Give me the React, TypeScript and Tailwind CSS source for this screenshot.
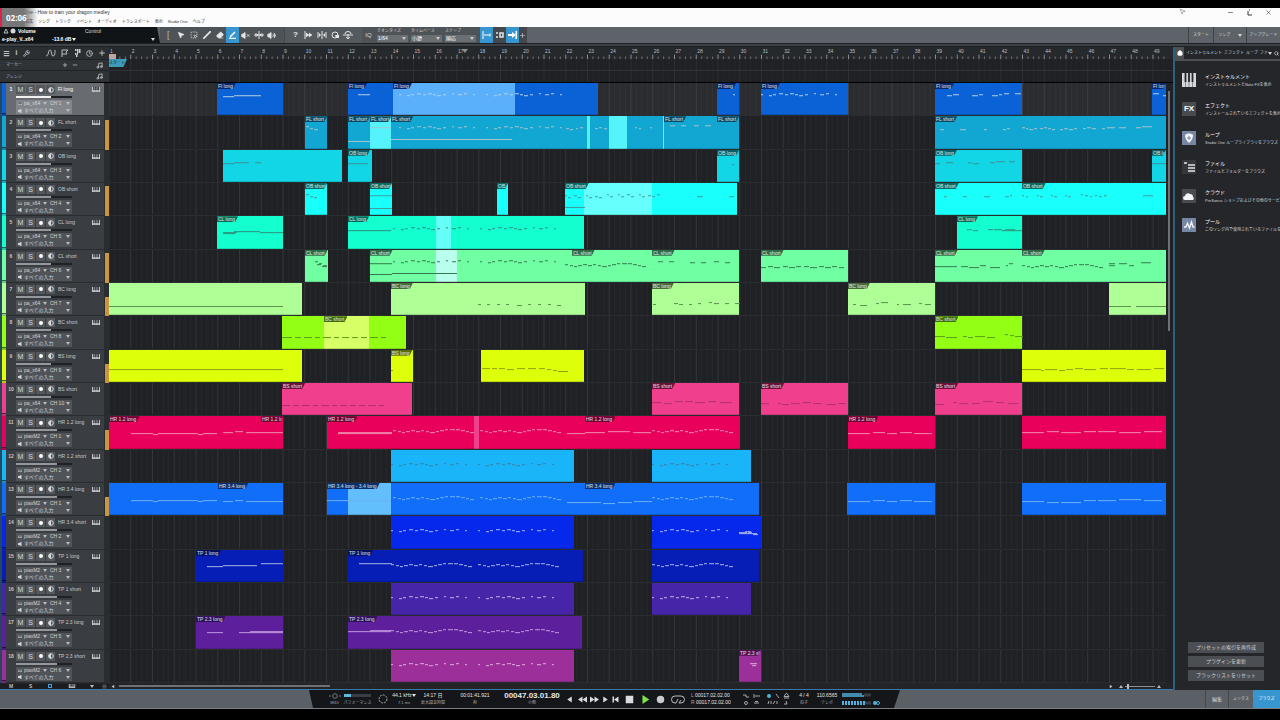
import type { ReactNode } from 'react'
import clsx from 'clsx'
import {
  Clock,
  Eraser,
  House,
  Menu,
  Minus,
  MousePointer2,
  Music,
  Pencil,
  Plus,
  Search,
  Slash,
  SquareDashedMousePointer,
  Volume2,
  VolumeX,
  Wrench,
  X,
} from 'lucide-react'

// the visible part of the song, in ticks, and the length of one bar
const SPAN = 1057
const BAR = 21.75

type Clip = {
  at: number
  end: number
  label?: string
  light?: boolean
}

type Track = {
  name: string
  inst: string
  ch: number
  color: string
  light?: string
  tab: string
  ink: string
  volume: number
  meter?: number
  clips: Clip[]
  notes: string
}

// the tune that most of the instruments share, four bars long
const TUNE =
  'h3m2 1h3m1 1h3m1-1h4m1-1h4m1 1h4m1-1h3m2 1h3m1 1h5m1-1h3m1-1h4m1-1h3m2 0h5m1 0h4m1 1h4m1 1h3m1 1h4'
const STAB =
  'h2m6 1h3m1-1h3m3-1h4m2 1h3m2-1h4m1 1h3m1 1h4m2-1h3m6-1h2m4 1h4m2-1h3m6 1h2'

const twice = (x: number, y: number, part: string) =>
  `M${x} ${y}${part}M${x + 87} ${y}${part}`
const once = (x: number, y: number, part: string) => `M${x} ${y}${part}`

const tracks: Track[] = [
  {
    name: 'Fl long',
    inst: 'pa_x64',
    ch: 1,
    color: '#0b61d6',
    light: '#5bb0fb',
    tab: '#06276b',
    ink: '#b9cfe8',
    volume: 62,
    clips: [
      { at: 108, end: 174, label: 'Fl long' },
      { at: 239, end: 284, label: 'Fl long' },
      { at: 284, end: 406, label: 'Fl long', light: true },
      { at: 406, end: 489 },
      { at: 608, end: 630, label: 'Fl long' },
      { at: 652, end: 739, label: 'Fl long' },
      { at: 826, end: 913, label: 'Fl long' },
      { at: 1043, end: 1057, label: 'Fl long' },
    ],
    notes: `M114 14h11M125 13h27M249 12h12${twice(290, 12, STAB)}M624 12h2${once(652, 12, STAB)}M838 13h5m1-1h6m13 1h6m1-1h4m9 1h6m1-1h3m2-1h5m6 0h6M1044 11h6m4 2h3`,
  },
  {
    name: 'FL short',
    inst: 'pa_x64',
    ch: 2,
    color: '#12a6d3',
    light: '#55f3fb',
    tab: '#0a4a63',
    ink: '#a9c3c9',
    volume: 62,
    meter: 90,
    clips: [
      { at: 196, end: 218, label: 'FL short' },
      { at: 239, end: 261, label: 'FL short' },
      { at: 261, end: 282, label: 'FL short', light: true },
      { at: 282, end: 478, label: 'FL short' },
      { at: 478, end: 481, light: true },
      { at: 481, end: 500 },
      { at: 500, end: 518, light: true },
      { at: 518, end: 554 },
      { at: 554, end: 555, light: true },
      { at: 555, end: 608, label: 'FL short' },
      { at: 608, end: 630, label: 'FL short' },
      { at: 826, end: 1057, label: 'FL short' },
    ],
    notes: `M197 11h3m1 2h3m1 1h4M239 26h22M261 12h21M282 24h121${twice(290, 12, STAB)}M457 13h3m1 1h3m3-1h2m2-1h3m12 1h3m1-1h3m2 1h3m28-1h2m2 1h2m9-1h2m18-2h5m6 0h5m8 0h5m6 0h6M831 14h4m16 0h6m18 0h3m16 0h3m1-1h3M913 12h3m1 1h2m1 1h4m1-1h3M931 13h3m1-1h3m1 1h3m1 1h3M951 14h3m1-1h4m1 1h4m1-1h3M974 13h3m1-1h4m1 1h4m6 0h3m2-1h8m4 0h7m10 0h5m1-1h10`,
  },
  {
    name: 'OB long',
    inst: 'pa_x64',
    ch: 3,
    color: '#12d6e6',
    tab: '#0a5f66',
    ink: '#3f8f96',
    volume: 62,
    clips: [
      { at: 114, end: 233 },
      { at: 239, end: 263, label: 'OB long' },
      { at: 608, end: 630, label: 'OB long' },
      { at: 826, end: 913, label: 'OB long' },
      { at: 1043, end: 1057, label: 'OB long' },
    ],
    notes:
      'M114 14h11M125 13h15m6 0h6M239 14h20M623 15h2M826 14h5m6-1h7m15 0h4m1 1h6m11-1h5m1-1h9m4 0h6M1043 14h14',
  },
  {
    name: 'OB short',
    inst: 'pa_x64',
    ch: 4,
    color: '#19fffb',
    light: '#66fffd',
    tab: '#0b6b62',
    ink: '#3f9d9c',
    volume: 62,
    meter: 90,
    clips: [
      { at: 196, end: 218, label: 'OB short' },
      { at: 261, end: 283, label: 'OB short' },
      { at: 388, end: 399, label: 'OB short' },
      { at: 456, end: 475, label: 'OB short' },
      { at: 475, end: 543, light: true },
      { at: 543, end: 628 },
      { at: 826, end: 913, label: 'OB short' },
      { at: 913, end: 1057, label: 'OB short' },
    ],
    notes:
      'M197 12h3m1 2h3m1 1h3M261 13h22M261 26h22M456 25h20M456 13h2m1 2h3m3-2h3m1 2h3m5-2h2m1 2h3m3-1h3m1 1h3m5-3h2m1 2h3m5-2h2m1 2h3m3-2h3m1 2h3m5-2h2m1 2h3m3-1h3m1 1h3m2-2h3M588 14h6m26 0h5M835 14h3m16 0h4m17 0h6m15 0h4m1-1h2M913 13h2m2 1h2m9-1h2m1 1h3m8-1h2m1 1h3m8-1h2m1 1h3m10-2h2m2 1h3m2 1h2m3-1h2m2 1h3m2-1h3m36 0h10',
  },
  {
    name: 'CL long',
    inst: 'pa_x64',
    ch: 5,
    color: '#14ffcf',
    light: '#66fff8',
    tab: '#0a6b57',
    ink: '#2b8f78',
    volume: 62,
    clips: [
      { at: 108, end: 174, label: 'CL long' },
      { at: 239, end: 327, label: 'CL long' },
      { at: 327, end: 342, light: true },
      { at: 342, end: 475 },
      { at: 848, end: 913, label: 'CL long' },
    ],
    notes: `M114 17h14M114 18h12M125 16h16m0 0h10M151 17h23M239 15h43${twice(284, 13, STAB)}M858 14h5m1 1h5m10-1h5m1 0h8m3 0h10M893 15h20`,
  },
  {
    name: 'CL short',
    inst: 'pa_x64',
    ch: 6,
    color: '#70ffa3',
    light: '#b8ffed',
    tab: '#2e6b44',
    ink: '#35784d',
    volume: 62,
    meter: 90,
    clips: [
      { at: 196, end: 219, label: 'CL short' },
      { at: 261, end: 327, label: 'CL short' },
      { at: 327, end: 348, light: true },
      { at: 348, end: 463 },
      { at: 463, end: 543, label: 'CL short' },
      { at: 543, end: 630, label: 'CL short' },
      { at: 652, end: 739, label: 'CL short' },
      { at: 826, end: 913, label: 'CL short' },
      { at: 913, end: 1057, label: 'CL short' },
    ],
    notes: `M206 12h3m1 2h3m1 2h4M208 15h4m1 2h5M261 14h22M261 25h22M283 24h65${twice(284, 12, STAB)}${once(456, 15, TUNE)}M549 12h5m6 0h5m16 1h5m6 0h5m8-1h5m6 1h5M652 18h5m2-1h5m1 1h6m3-1h5m1 1h6m1-1h5m3 0h5m1 1h7m2-1h5m1 1h6m1-1h5m2 1h5M826 17h22m4 0h7m1 1h10m1-2h6m4 2h10m6-2h2m1-2h4${once(913, 16, TUNE)}M1000 14h6m4 0h8m14-1h10M1000 16h6m14 0h5`,
  },
  {
    name: 'BC long',
    inst: 'pa_x64',
    ch: 7,
    color: '#adff96',
    tab: '#4a6b3e',
    ink: '#5d8f4e',
    volume: 62,
    meter: 58,
    clips: [
      { at: 0, end: 193 },
      { at: 282, end: 476, label: 'BC long' },
      { at: 543, end: 630, label: 'BC long' },
      { at: 739, end: 826, label: 'BC long' },
      { at: 1000, end: 1057 },
    ],
    notes:
      'M0 24h174M369 22h3m6 0h3m7 0h3m6 0h3m8 1h5m6-1h3m7 0h3m7 0h3m6 1h4M544 22h3m18-1h4m1 1h4m6 0h3m6-1h3m8-1h3m2 1h5m6 0h4m6 0h5M744 22h3m4 1h7m9-2h3m2-1h7m9 2h2m4 0h8m8-1h3m3 1h6M1000 24h22m5 0h30',
  },
  {
    name: 'BC short',
    inst: 'pa_x64',
    ch: 8,
    color: '#93ff14',
    light: '#d7ff66',
    tab: '#3f6b0c',
    ink: '#5a9d15',
    volume: 62,
    clips: [
      { at: 173, end: 215 },
      { at: 215, end: 260, label: 'BC short', light: true },
      { at: 260, end: 297 },
      { at: 826, end: 913, label: 'BC short' },
    ],
    notes:
      'M173 22h10m3 0h6m3 0h8m3 0h5m3 0h8m3 0h5m3 0h7m3 0h6m3 0h6m3 0h8m3 0h5M826 21h10m1 1h11m6-1h4m1 1h5m2-1h10m2 1h8m10-3h3m2 1h4m1 1h8',
  },
  {
    name: 'BS long',
    inst: 'pa_x64',
    ch: 9,
    color: '#deff0a',
    tab: '#5c6b0a',
    ink: '#8ba312',
    volume: 62,
    meter: 58,
    clips: [
      { at: 0, end: 193 },
      { at: 282, end: 304, label: 'BS long' },
      { at: 372, end: 475 },
      { at: 913, end: 1057 },
    ],
    notes: `M0 20h174M282 21h2M373 19h8m2 0h5m2 0h6m2 1h7m3-1h8m3 0h8m3 0h6m2 1h4m2 1h4m1 1h10M913 20h19m0 1h3m1-1h12m2 1h6m1-1h7m2-1h8m1 1h12m4-1h8m2 0h16m1 1h7m3 0h14m3-1h10`,
  },
  {
    name: 'BS short',
    inst: 'pa_x64',
    ch: 10,
    color: '#f03f8c',
    tab: '#6b1038',
    ink: '#b0336d',
    volume: 62,
    clips: [
      { at: 173, end: 303, label: 'BS short' },
      { at: 543, end: 630, label: 'BS short' },
      { at: 652, end: 739, label: 'BS short' },
      { at: 826, end: 913, label: 'BS short' },
    ],
    notes:
      'M173 23h8m3 0h6m3 0h8m3 0h5m3 0h8m3 0h5m3 0h7m3 0h6m3 0h6m3 0h8m3 0h5M543 20h9m3 1h8m3-2h8m2 0h8m2 1h10m3-1h8m4 1h12M652 21h8m9 0h3m1 1h7m2-1h9m3-1h8m2 1h9m4 1h10m2-1h8M826 22h9m9-2h4m2 1h9m4 0h8m3-2h10m3 1h8m4 1h10',
  },
  {
    name: 'HR 1.2 long',
    inst: 'piaxM2',
    ch: 1,
    color: '#e8005b',
    light: '#f03f8c',
    tab: '#6b0030',
    ink: '#f28db0',
    volume: 74,
    meter: 58,
    clips: [
      { at: 0, end: 152, label: 'HR 1.2 long' },
      { at: 152, end: 174, label: 'HR 1.2 long' },
      { at: 218, end: 365, label: 'HR 1.2 long' },
      { at: 365, end: 370, light: true },
      { at: 370, end: 476 },
      { at: 476, end: 543, label: 'HR 1.2 long' },
      { at: 543, end: 631 },
      { at: 739, end: 826, label: 'HR 1.2 long' },
      { at: 913, end: 1057 },
    ],
    notes: `M22 18h22m0 1h5m0-1h40m0 1h5m0-1h14m6-1h10m2-1h8m3 1h37M229 17h54M229 18h54${twice(284, 15, TUNE)}M458 18h18${once(476, 17, 'h20m3-1h22m3 1h18')}${once(543, 15, TUNE)}M739 18h22m3-1h12m2 1h10m3-1h12m2 1h18M913 17h22m3-1h12m2 1h20m3-1h12m2 0h18m3 1h22m3-1h18`,
  },
  {
    name: 'HR 1.2 short',
    inst: 'piaxM2',
    ch: 2,
    color: '#1ab4f8',
    tab: '#0a4a6b',
    ink: '#3a82a8',
    volume: 74,
    clips: [
      { at: 282, end: 465 },
      { at: 543, end: 642 },
    ],
    notes: twice(282, 15, STAB) + once(543, 15, STAB),
  },
  {
    name: 'HR 3.4 long',
    inst: 'piaxM2',
    ch: 1,
    color: '#116ef8',
    light: '#62bffb',
    tab: '#0a2f6b',
    ink: '#6fb2f2',
    volume: 74,
    meter: 58,
    clips: [
      { at: 0, end: 109 },
      { at: 109, end: 174, label: 'HR 3.4 long' },
      { at: 218, end: 239, label: 'HR 3.4 long - 3.4 long' },
      { at: 239, end: 282, light: true },
      { at: 282, end: 476 },
      { at: 476, end: 543, label: 'HR 3.4 long' },
      { at: 543, end: 650 },
      { at: 738, end: 826 },
      { at: 913, end: 1057 },
    ],
    notes: `M22 18h22m0 1h5m0-1h40m0 1h5m0-1h14m6 1h10m2-1h8m3 1h37M218 18h64${twice(284, 15, TUNE)}M458 20h18${once(476, 20, 'h16m2 1h12m3-1h14m2-1h18')}${once(543, 15, TUNE)}M739 19h22m3-1h12m2 1h10m3-1h12m2 1h18M913 19h22m3 1h12m2 0h20m3-2h12m2 0h18m3-1h22m3 1h18`,
  },
  {
    name: 'HR 3.4 short',
    inst: 'piaxM2',
    ch: 2,
    color: '#0628ea',
    tab: '#04136b',
    ink: '#a9b6f5',
    volume: 74,
    clips: [
      { at: 282, end: 465 },
      { at: 543, end: 652 },
    ],
    notes: `${twice(282, 15, STAB)}${once(543, 15, STAB)}M630 17h8m1 0h4M630 18h18M636 16h6M644 19h5`,
  },
  {
    name: 'TP 1 long',
    inst: 'piaxM2',
    ch: 3,
    color: '#061eb6',
    tab: '#040f5c',
    ink: '#a9b6e8',
    volume: 74,
    clips: [
      { at: 87, end: 174, label: 'TP 1 long' },
      { at: 239, end: 474, label: 'TP 1 long' },
      { at: 543, end: 650 },
    ],
    notes: `M98 17h16M114 16h34m4-2h22M250 14h33${twice(282, 15, TUNE)}${once(543, 15, TUNE)}`,
  },
  {
    name: 'TP 1 short',
    inst: 'piaxM2',
    ch: 4,
    color: '#4625a9',
    tab: '#230f5c',
    ink: '#c2b3e8',
    volume: 74,
    clips: [
      { at: 282, end: 465 },
      { at: 543, end: 642 },
    ],
    notes: twice(282, 15, STAB) + once(543, 15, STAB),
  },
  {
    name: 'TP 2.3 long',
    inst: 'piaxM2',
    ch: 5,
    color: '#5e1f9d',
    tab: '#2c0f52',
    ink: '#c39be0',
    volume: 74,
    clips: [
      { at: 87, end: 174, label: 'TP 2.3 long' },
      { at: 239, end: 473, label: 'TP 2.3 long' },
    ],
    notes: `M98 17h16m16 0h44M141 16h33M239 16h43M261 15h21${twice(282, 15, TUNE)}`,
  },
  {
    name: 'TP 2.3 short',
    inst: 'piaxM2',
    ch: 6,
    color: '#9c2f99',
    tab: '#521052',
    ink: '#e3aee0',
    volume: 74,
    clips: [
      { at: 282, end: 465 },
      { at: 630, end: 652, label: 'TP 2.3 short' },
    ],
    notes: `${twice(282, 15, STAB)}M641 14h7M643 16h4`,
  },
]

const menus = [
  'ファイル',
  '編集',
  'ソング',
  'トラック',
  'イベント',
  'オーディオ',
  'トランスポート',
  '表示',
  'Studio One',
  'ヘルプ',
]

const pct = (ticks: number) => `${(ticks / SPAN) * 100}%`

// beat and bar lines, shared by every lane
const bars = Array.from({ length: 49 }, (_, i) => i)
const barLines = bars.map((i) => `M${i * BAR} 0v33`).join('')
const beatLines = bars
  .map((i) => [1, 2, 3].map((b) => `M${(i + b / 4) * BAR} 0v33`).join(''))
  .join('')

// a tab may run on over the next clip only where that clip has no tab of its own
function tabWidth(clips: Clip[], i: number) {
  const clip = clips[i]
  const next = clips[i + 1]
  if (next && next.at === clip.end && !next.label) return undefined
  return pct(clip.end - clip.at)
}

function Lines() {
  return (
    <svg
      className="absolute inset-0 h-full w-full"
      viewBox={`0 0 ${SPAN} 33`}
      preserveAspectRatio="none"
      shapeRendering="crispEdges"
      aria-hidden="true"
    >
      <path d={beatLines} stroke="#fff" strokeOpacity=".04" />
      <path d={barLines} stroke="#fff" strokeOpacity=".1" />
    </svg>
  )
}

function Arrow({ className }: { className?: string }) {
  return (
    <svg
      viewBox="0 0 4 3"
      className={clsx('h-[3px] w-[4px] shrink-0 fill-current', className)}
      aria-hidden="true"
    >
      <path d="M0 0h4L2 3z" />
    </svg>
  )
}

function Keys({ className }: { className?: string }) {
  return (
    <svg viewBox="0 0 16 10" className={className} aria-hidden="true">
      <path d="M0 0h16v10H0z" fill="#c9cbce" />
      <path
        d="M2.500 0h2v6h-2zM5.800 0h2v6h-2zM9 0h2v6H9zM12 0h2v6h-2zM3.500 6v4M6.800 6v4M10 6v4M13 6v4"
        fill="#3a3d41"
        stroke="#3a3d41"
        strokeWidth=".5"
      />
    </svg>
  )
}

function Tool({
  label,
  active,
  children,
}: {
  label: string
  active?: boolean
  children: ReactNode
}) {
  return (
    <button
      aria-label={label}
      className={clsx(
        'flex h-full w-[13px] shrink-0 items-center justify-center',
        active ? 'bg-[#3796cf] text-white' : 'text-[#e4e6e8]',
      )}
    >
      {children}
    </button>
  )
}

function Field({ label, value }: { label: string; value: string }) {
  return (
    <label className="flex w-[31px] flex-col justify-center gap-px text-[4px] text-[#c9cccf]">
      <span className="h-[6px] leading-[6px] whitespace-nowrap">{label}</span>
      <span className="flex h-[7px] items-center bg-[#6a6f74] pr-[2px]">
        <select className="h-full min-w-0 flex-1 appearance-none bg-transparent pl-px text-[5px] leading-none text-white">
          <option>{value}</option>
        </select>
        <Arrow />
      </span>
    </label>
  )
}

function TitleBar() {
  return (
    <header className="relative h-[19px] shrink-0 overflow-hidden bg-[#fcfcfc] text-[#33363a]">
      <div className="flex h-[9px] items-center pl-[8px] text-[5px] leading-none">
        <h1 className="flex-1">Studio One - How to train your dragon medley</h1>
        <div className="flex gap-[12px] pr-[8px]">
          <button aria-label="最小化">
            <Minus size={7} />
          </button>
          <button aria-label="元に戻す">
            <svg viewBox="0 0 7 7" className="h-[7px] w-[7px]" aria-hidden="true">
              <path d="M2 2v4h4M3 1h1" stroke="#33363a" fill="none" />
            </svg>
          </button>
          <button aria-label="閉じる">
            <X size={7} />
          </button>
        </div>
      </div>
      <nav className="flex h-[9px] items-center gap-[5px] pl-[4px] text-[4px] leading-none">
        {menus.map((menu) => (
          <button key={menu} className="whitespace-nowrap">
            {menu}
          </button>
        ))}
      </nav>
      <div className="absolute inset-y-0 left-0 flex w-[38px] items-center border-l-2 border-[#d9234a] bg-linear-to-r from-[#777] from-60% to-transparent pl-[4px] font-['Open_Sans'] text-[8px] font-bold text-white">
        02:06
      </div>
      <MousePointer2
        size={7}
        className="absolute top-0 right-[94px] text-[#77797c]"
      />
    </header>
  )
}

function Toolbar() {
  return (
    <div className="flex h-[16px] shrink-0 items-stretch bg-[#5d6368] text-[5px] leading-none text-[#d5d8da]">
      <div className="grid w-[160px] shrink-0 grid-cols-[50px_33px_1fr_9px] grid-rows-2 items-center bg-[#111417] pl-[2px] [clip-path:polygon(0_0,157px_0,100%_100%,0_100%)]">
        <span className="flex items-center gap-[2px] font-bold text-white">
          <svg viewBox="0 0 14 6" className="h-[6px] w-[14px]" aria-hidden="true">
            <path d="M2 5l2-4 2 4z" fill="none" stroke="#b9bcbf" />
            <circle cx="11" cy="3" r="2.500" fill="#d5d8da" />
          </svg>
          Volume
        </span>
        <span />
        <span>Control</span>
        <span />
        <span className="font-bold text-white">e-play_V..x64</span>
        <span className="flex items-center gap-px font-bold whitespace-nowrap text-white">
          -13.6 dB <Arrow />
        </span>
        <span />
        <Arrow />
      </div>
      <div className="flex w-[124px] items-center bg-[#4e5357] pl-[2px]">
        <span className="w-[12px] pl-[5px] text-[9px] text-[#aeb1b4]">[</span>
        <Tool label="矢印ツール">
          <MousePointer2 size={8} fill="currentColor" />
        </Tool>
        <Tool label="範囲ツール">
          <SquareDashedMousePointer size={8} />
        </Tool>
        <Tool label="分割ツール">
          <Slash size={8} strokeWidth={5} />
        </Tool>
        <Tool label="消しゴムツール">
          <Eraser size={8} fill="currentColor" />
        </Tool>
        <Tool label="ペイントツール" active>
          <svg viewBox="0 0 10 8" className="h-[8px] w-[10px]" aria-hidden="true">
            <path d="M2 6l5-5M1 7.500h7" stroke="currentColor" strokeWidth="1.500" />
          </svg>
        </Tool>
        <Tool label="ミュートツール">
          <VolumeX size={9} fill="currentColor" />
        </Tool>
        <Tool label="ベンドツール">
          <svg viewBox="0 0 10 8" className="h-[8px] w-[10px]" aria-hidden="true">
            <path d="M0 4h10M5 0v8M2 2v4M8 2v4M3.500 3v2M6.500 3v2" stroke="currentColor" />
          </svg>
        </Tool>
        <Tool label="試聴ツール">
          <Volume2 size={9} fill="currentColor" />
        </Tool>
      </div>
      <div className="flex w-[78px] items-center border-l border-[#44494d] bg-[#555a5f] pl-[4px]">
        <Tool label="ヘルプ">
          <span className="text-[8px] font-bold">?</span>
        </Tool>
        <Tool label="先頭へ">
          <svg viewBox="0 0 9 8" className="h-[8px] w-[9px]" aria-hidden="true">
            <path d="M1 0v8M2 4h6" stroke="currentColor" />
            <path d="M2 1.500L5 4 2 6.500zM5 1.500L8 4 5 6.500z" fill="currentColor" />
          </svg>
        </Tool>
        <Tool label="ループ範囲">
          <svg viewBox="0 0 10 8" className="h-[8px] w-[10px]" aria-hidden="true">
            <path d="M1 1v6M9 1v6M5 0v8" stroke="currentColor" />
            <path d="M2 2l2 2-2 2zM8 2L6 4l2 2z" fill="currentColor" />
          </svg>
        </Tool>
        <Tool label="クオンタイズ実行">
          <svg viewBox="0 0 8 8" className="h-[8px] w-[8px]" aria-hidden="true">
            <circle cx="4" cy="4" r="3" fill="none" stroke="currentColor" />
            <path d="M4 4h4v3H5z" fill="currentColor" />
          </svg>
        </Tool>
        <Tool label="マクロ">
          <svg viewBox="0 0 10 8" className="h-[8px] w-[10px]" aria-hidden="true">
            <path d="M2 3a3 2.500 0 016 0M0 4h10M5 3v5M3 6l2 2 2-2" fill="none" stroke="currentColor" />
          </svg>
        </Tool>
      </div>
      <div className="flex w-[118px] items-stretch gap-[3px] bg-[#4e5357] pl-px">
        <button className="w-[11px] text-[6px]">IQ</button>
        <Field label="クオンタイズ" value="1/64" />
        <Field label="タイムベース" value="小節" />
        <Field label="スナップ" value="順応" />
      </div>
      <div className="flex items-center bg-[#44484c]">
        <Tool label="スナップ" active>
          <svg viewBox="0 0 9 8" className="h-[8px] w-[9px]" aria-hidden="true">
            <path d="M1 0v8M2 4h6M8 2.500v3" stroke="currentColor" />
          </svg>
        </Tool>
        <Tool label="グリッド">
          <svg viewBox="0 0 9 6" className="h-[6px] w-[9px]" aria-hidden="true">
            <path d="M1 1h2M1 5h2M5 1h3v4H5z" stroke="currentColor" strokeWidth="1.500" fill="none" />
          </svg>
        </Tool>
        <Tool label="オートスクロール" active>
          <svg viewBox="0 0 9 8" className="h-[8px] w-[9px]" aria-hidden="true">
            <path d="M8.500 0v8M0 4h5" stroke="currentColor" strokeWidth="2" />
            <path d="M4 1l4 3-4 3z" fill="currentColor" />
          </svg>
        </Tool>
        <button aria-label="カーソル追従" className="w-[8px]">
          <Plus size={7} />
        </button>
      </div>
      <nav className="ml-auto grid w-[92px] grid-cols-[25px_33px_34px] text-center">
        <button className="border-l border-[#3f4347] text-[4px]">スタート</button>
        <button className="flex items-center justify-center gap-[7px] border-l border-[#3f4347] text-[4px]">
          ソング <Arrow />
        </button>
        <button className="border-l border-[#3f4347] text-[4px] whitespace-nowrap">
          アップグレード
        </button>
      </nav>
    </div>
  )
}

function Ruler() {
  return (
    <div className="shrink-0 border-b border-black text-[5px] leading-none text-[#b9bcc0]">
      <div className="flex h-[12px]">
        <div className="flex w-[109px] items-center justify-between bg-[#2c2f32] px-[3px]">
          <Menu size={7} strokeWidth={4} />
          <span className="text-[8px] font-bold">i</span>
          <Wrench size={7} strokeWidth={3} />
          <span className="w-[6px]" />
          <svg viewBox="0 0 10 8" className="h-[8px] w-[10px]" aria-hidden="true">
            <path d="M0 7C3 7 2 1 4 1s1 6 3 6 2-3 2-6" stroke="currentColor" fill="none" />
          </svg>
          <svg viewBox="0 0 8 8" className="h-[8px] w-[8px]" aria-hidden="true">
            <path d="M1 8V1h6L5 3l1 2H1" stroke="currentColor" fill="none" />
          </svg>
          <svg viewBox="0 0 6 8" className="h-[8px] w-[6px]" aria-hidden="true">
            <path d="M0 1h6M2 3h4M0 5h3M1 7h2" stroke="#fff" strokeWidth="1.500" strokeDasharray="1.500 .5" />
          </svg>
          <Clock size={7} strokeWidth={3} />
          <Plus size={8} strokeWidth={3} />
        </div>
        <div className="relative flex-1 overflow-hidden bg-[#26292c]">
          <div className="absolute inset-y-0 left-0 right-[7px]">
            <svg
              className="absolute inset-0 h-full w-full"
              viewBox={`0 0 ${SPAN} 33`}
              preserveAspectRatio="none"
              shapeRendering="crispEdges"
              aria-hidden="true"
            >
              <path d={beatLines} stroke="#8f9296" strokeDasharray="0 26 7" />
              <path d={barLines} stroke="#b9bcc0" strokeDasharray="0 21 12" />
            </svg>
            {bars.map((i) => (
              <span
                key={i}
                className="absolute top-[2px] pl-px"
                style={{ left: pct(i * BAR) }}
              >
                {i + 1}
              </span>
            ))}
            <div
              className="absolute top-[2px] h-[4px] w-[6px] bg-[#8b8e92] [clip-path:polygon(0_0,100%_0,50%_100%)]"
              style={{ left: pct(353) }}
            />
            <div className="absolute top-[7px] left-0 h-[5px] w-[7px] bg-[#b9a9a0]" />
          </div>
        </div>
      </div>
      <div className="flex h-[12px]">
        <div className="flex w-[109px] items-center border-y border-[#202225] bg-[#303336] pr-[6px] pl-[6px]">
          <span className="w-[56px] text-[4px]">マーカー</span>
          <Plus size={6} strokeWidth={3} />
          <Minus size={6} strokeWidth={3} className="ml-[4px]" />
          <Music size={7} strokeWidth={3} className="ml-auto" />
        </div>
        <div className="relative flex-1 border-b border-[#303336] bg-[#1f2124]">
          <div className="absolute inset-y-0 right-[7px] left-0">
            <Lines />
          </div>
          <span className="absolute top-0 left-0 h-[8px] w-[18px] bg-[#3f9cb8] text-[4px] leading-[8px] whitespace-nowrap text-[#0d2a33] [clip-path:polygon(0_0,100%_0,80%_100%,0_100%)]">
            スタート
          </span>
        </div>
      </div>
      <div className="flex h-[11px]">
        <div className="flex w-[109px] items-center bg-[#303336] px-[6px]">
          <span className="text-[4px]">アレンジ</span>
          <Music size={7} strokeWidth={3} className="ml-auto" />
        </div>
        <div className="relative flex-1 bg-[#1f2124]">
          <div className="absolute inset-y-0 right-[7px] left-0">
            <Lines />
          </div>
        </div>
      </div>
    </div>
  )
}

function TrackHeader({ track, index }: { track: Track; index: number }) {
  const selected = index === 0
  const button =
    'flex h-[9px] w-[9px] items-center justify-center bg-[#54585c] text-[7px] leading-none text-[#d5d8da]'
  const line = clsx(
    'flex h-[7px] items-center px-[2px]',
    selected ? 'bg-[#83878c]' : 'bg-[#505459]',
  )
  const select =
    'h-full min-w-0 appearance-none bg-transparent text-[5px] leading-none text-[#d0d3d6]'

  return (
    <div className="flex w-[109px] shrink-0 border-l-2 border-[#27485c] bg-[#2a2d30]">
      <div
        className="flex w-[4px] flex-col justify-end"
        style={{ backgroundColor: track.color }}
      >
        <div className="h-[3px] border-t border-black/50 bg-black/20" />
      </div>
      <div
        className={clsx(
          'flex w-[98px] border-b border-[#2a2d30] text-[5px] leading-none text-[#c5c8cb]',
          selected ? 'bg-[#686c71] text-white' : 'bg-[#3a3d41]',
        )}
      >
        <span className="w-[10px] pt-[4px] text-center font-bold">
          {index + 1}
        </span>
        <div className="flex flex-1 flex-col pt-[2px]">
          <div className="flex items-center gap-px pr-[4px]">
            <button className={button}>M</button>
            <button className={button}>S</button>
            <button className={button} aria-label="録音">
              <span className="h-[4px] w-[4px] rounded-full bg-white" />
            </button>
            <button className={button} aria-label="モニター">
              <svg viewBox="0 0 6 6" className="h-[6px] w-[6px]" aria-hidden="true">
                <circle cx="3" cy="3" r="2.300" fill="none" stroke="currentColor" />
                <path d="M3 .5v5a2.500 2.500 0 010-5z" fill="currentColor" />
              </svg>
            </button>
            <span className="ml-[2px] flex-1 whitespace-nowrap">{track.name}</span>
            <Keys className="h-[5px] w-[8px]" />
          </div>
          <input
            type="range"
            aria-label={`${track.name} 音量`}
            defaultValue={track.volume}
            className="mt-[2px] mb-[2px] h-[2px] w-[56px] appearance-none [&::-webkit-slider-thumb]:w-0 [&::-webkit-slider-thumb]:appearance-none"
            style={{
              background: `linear-gradient(90deg, ${selected ? '#f0f0f0' : '#94979b'} ${track.volume}%, #1f2124 0)`,
            }}
          />
          <div className="w-[56px]">
            <div className={line}>
              <Keys className="mr-[2px] h-[3px] w-[4px]" />
              <select aria-label="音源" className={clsx(select, 'w-[19px]')}>
                <option>{track.inst}</option>
              </select>
              <Arrow className="text-[#b9bcc0]" />
              <select
                aria-label="チャンネル"
                className={clsx(select, 'ml-[3px] flex-1')}
              >
                <option>CH {track.ch}</option>
              </select>
              <Arrow className="text-[#b9bcc0]" />
            </div>
            <div className={line}>
              <svg viewBox="0 0 4 4" className="mr-[2px] h-[4px] w-[4px] fill-[#d0d3d6]" aria-hidden="true">
                <path d="M0 1h1l2-1v4L1 3H0zM3.500 0H4v4h-.5z" />
              </svg>
              <select aria-label="入力" className={clsx(select, 'flex-1')}>
                <option>すべての入力</option>
              </select>
              <Arrow className="text-[#b9bcc0]" />
            </div>
          </div>
        </div>
      </div>
      <div className="flex flex-1 items-end pl-px">
        {track.meter && (
          <div
            className="w-[4px] bg-[#c9963f]"
            style={{ height: `${track.meter}%` }}
          />
        )}
      </div>
    </div>
  )
}

function Lane({ track, selected }: { track: Track; selected: boolean }) {
  return (
    <div className="min-w-0 flex-1 bg-[#1f2124] pr-[7px]">
      <div
        className={clsx(
          'relative h-full overflow-hidden border-b border-[#2a2d30]',
          selected && 'bg-[#2b2c2f]',
        )}
      >
        <Lines />
        {track.clips.map((clip) => (
          <div
            key={clip.at}
            className="absolute inset-y-0 overflow-hidden border-b border-black/15"
            style={{
              left: pct(clip.at),
              width: pct(clip.end - clip.at),
              backgroundColor: clip.light ? track.light : track.color,
            }}
          />
        ))}
        {track.clips.map(
          (clip, i) =>
            clip.label && (
              <span
                key={clip.at}
                className="absolute top-0 h-[6px] overflow-hidden pr-[3px] pl-px text-[5px] leading-[6px] whitespace-nowrap text-white/85 [clip-path:polygon(0_0,100%_0,calc(100%-3px)_100%,0_100%)]"
                style={{
                  left: pct(clip.at),
                  maxWidth: tabWidth(track.clips, i),
                  backgroundColor: track.tab,
                }}
              >
                {clip.label}
              </span>
            ),
        )}
        <svg
          className="absolute inset-0 h-full w-full"
          viewBox={`0 0 ${SPAN} 33`}
          preserveAspectRatio="none"
          shapeRendering="crispEdges"
          aria-hidden="true"
        >
          <path d={track.notes} stroke={track.ink} fill="none" />
        </svg>
      </div>
    </div>
  )
}

function ArrangeFooter() {
  return (
    <div className="flex h-[7px] shrink-0 items-center border-b border-[#3b78a8] bg-[#222428] text-[5px] leading-none text-[#b9bcc0]">
      <div className="flex w-[109px] items-center justify-between bg-[#1b1d20] pr-[2px] pl-[9px]">
        <button className="font-bold">M</button>
        <button className="ml-[8px] font-bold">S</button>
        <button
          aria-label="表示"
          className="mx-[8px] h-[4px] w-[4px] border border-[#3fa0dd]"
        />
        <Keys className="h-[4px] w-[8px]" />
        <Arrow className="ml-[6px]" />
        <Menu size={5} />
      </div>
      <div className="flex flex-1 items-center pr-[12px] pl-[2px]">
        <Arrow className="mr-[4px] rotate-90" />
        <div className="mr-auto h-[2px] w-[211px] bg-[#6d7176]" />
        <div className="flex items-center gap-[2px]">
          <Arrow className="rotate-[-90deg]" />
          <Arrow className="ml-[4px] rotate-180" />
          <input
            type="range"
            aria-label="ズーム"
            defaultValue={8}
            className="h-px w-[30px] appearance-none bg-[#8b8e92] [&::-webkit-slider-thumb]:h-[5px] [&::-webkit-slider-thumb]:w-[2px] [&::-webkit-slider-thumb]:appearance-none [&::-webkit-slider-thumb]:bg-[#b9bcc0]"
          />
          <Arrow className="rotate-180" />
        </div>
      </div>
    </div>
  )
}

const shelf = [
  {
    title: 'インストゥルメント',
    text: 'インストゥルメントとNote FXを表示',
    box: 'bg-[#d5d7da]',
    icon: (
      <>
        <path d="M3.500 0v14M7 0v14M10.500 0v14" stroke="#55585c" strokeWidth=".6" />
        <path d="M3.500 0v9M7 0v9M10.500 0v9" stroke="#26282c" strokeWidth="1.800" />
      </>
    ),
  },
  {
    title: 'エフェクト',
    text: 'インストールされているエフェクトを表示',
    box: 'bg-[#484c51]',
    icon: null,
  },
  {
    title: 'ループ',
    text: 'Studio One ループライブラリをブラウズ',
    box: 'bg-[#7787a3]',
    icon: (
      <>
        <path d="M3 4c2-2 6-2 8 0 0 4-2 6-4 8-2-2-4-4-4-8z" fill="#f2f4f7" />
        <path d="M7 5v4M5 7h4" stroke="#7787a3" />
      </>
    ),
  },
  {
    title: 'ファイル',
    text: 'ファイルとフォルダーをブラウズ',
    box: 'bg-[#34373b]',
    icon: (
      <path d="M2 3h3M6 5h7M6 8h7M6 11h7" stroke="#e4e6e8" strokeWidth="1.500" />
    ),
  },
  {
    title: 'クラウド',
    text: 'PreSonus ショップおよびその他のサービス',
    box: 'bg-[#484c51]',
    icon: (
      <path d="M3 11a2 2 0 010-4 3 3 0 015-2 3 3 0 013 3 1.800 1.800 0 010 3z" fill="#f2f4f7" />
    ),
  },
  {
    title: 'プール',
    text: 'このソング内で使用されているファイルを表示',
    box: 'bg-[#7787a3]',
    icon: (
      <path d="M2 9h2l1.500-4 2 5 2-6 1.500 5h1.500" stroke="#f2f4f7" strokeWidth="1.300" fill="none" />
    ),
  },
]

function Browser() {
  return (
    <aside className="flex w-[107px] shrink-0 flex-col overflow-hidden border-l-2 border-[#2f5f7d] bg-[#24262a] text-[#d0d3d6]">
      <nav className="flex h-[14px] shrink-0 items-center gap-[2px] border-b-2 border-[#4d5055] text-[4px] leading-none whitespace-nowrap">
        <button
          aria-label="ホーム"
          className="flex h-full w-[9px] items-center justify-center bg-[#4d5055] text-white"
        >
          <House size={6} fill="currentColor" />
        </button>
        <button>インストゥルメント</button>
        <button>エフェクト</button>
        <button>ループ</button>
        <button className="flex items-center">
          ファ <Arrow />
        </button>
        <button aria-label="検索">
          <Search size={5} strokeWidth={3} />
        </button>
      </nav>
      <ul className="flex flex-col gap-[15px] pt-[12px] pl-[7px]">
        {shelf.map((item) => (
          <li key={item.title} className="flex h-[14px] gap-[9px]">
            <div
              className={clsx(
                'flex h-[14px] w-[14px] shrink-0 items-center justify-center text-[8px] leading-none font-bold text-white',
                item.box,
              )}
            >
              {item.icon ? (
                <svg viewBox="0 0 14 14" className="h-full w-full" aria-hidden="true">
                  {item.icon}
                </svg>
              ) : (
                'FX'
              )}
            </div>
            <div className="flex min-w-0 flex-1 flex-col justify-between leading-none whitespace-nowrap">
              <h2 className="text-[5px] leading-[7px] text-white">{item.title}</h2>
              <p className="text-[4px] leading-[5px]">{item.text}</p>
            </div>
          </li>
        ))}
      </ul>
      <div className="mt-auto flex flex-col gap-[3px] pr-[16px] pb-[9px] pl-[13px] text-[5px] leading-none">
        {[
          'プリセットの索引を再作成',
          'プラグインを更新',
          'ブラックリストをリセット',
        ].map((text) => (
          <button key={text} className="h-[11px] bg-[#4b4e53] whitespace-nowrap">
            {text}
          </button>
        ))}
      </div>
    </aside>
  )
}

function Readout({
  value,
  label,
  className,
}: {
  value: ReactNode
  label: ReactNode
  className: string
}) {
  return (
    <div
      className={clsx(
        'flex shrink-0 flex-col items-center justify-center gap-px whitespace-nowrap',
        className,
      )}
    >
      <span className="flex h-[7px] items-center text-[#e4e6e8]">{value}</span>
      <span className="h-[6px] text-[4px] leading-[6px]">{label}</span>
    </div>
  )
}

function Key({
  label,
  d,
  className,
}: {
  label: string
  d: string
  className: string
}) {
  return (
    <button
      aria-label={label}
      className={clsx('flex shrink-0 justify-center', className)}
    >
      <svg viewBox="0 0 12 12" className="h-[9px] w-[9px] fill-current" aria-hidden="true">
        <path d={d} />
      </svg>
    </button>
  )
}

function Transport() {
  return (
    <footer className="flex h-[19px] shrink-0 border-b border-[#7b7f84] bg-[#5b6067] text-[5px] leading-none text-[#a5a8ac]">
      <div className="ml-[309px] flex w-[591px] items-center bg-[#141619] pl-[16px] [clip-path:polygon(0_0,100%_0,calc(100%-6px)_100%,4px_100%)]">
        <Readout
          className="w-[19px]"
          value={
            <svg viewBox="0 0 12 6" className="h-[6px] w-[12px]" aria-hidden="true">
              <circle cx="6" cy="3" r="2.300" fill="none" stroke="#777a7e" />
              <path d="M0 3h2M10 3h2" stroke="#777a7e" />
            </svg>
          }
          label="MIDI"
        />
        <Readout
          className="w-[27px]"
          value={
            <span className="flex h-[3px] w-[27px] bg-[#3a3d41]">
              <span className="w-[7px] bg-[#5fb8dd]" />
            </span>
          }
          label="パフォーマンス"
        />
        <svg viewBox="0 0 10 10" className="mr-[3px] ml-[7px] h-[10px] w-[10px]" aria-hidden="true">
          <circle cx="5" cy="5" r="4" fill="none" stroke="#a5a8ac" strokeDasharray="2 1" />
        </svg>
        <Readout
          className="w-[26px]"
          value={
            <>
              44.1 kHz <Arrow />
            </>
          }
          label="7.1 ms"
        />
        <Readout className="w-[32px]" value="14:17 日" label="最大録音時間" />
        <Readout className="w-[52px]" value="00:01:41.921" label="秒" />
        <Readout
          className="w-[62px]"
          value={<span className="text-[8px] font-bold">00047.03.01.80</span>}
          label="小節"
        />
        <div className="flex items-center text-[#d9dbde]">
          <Key className="w-[13px]" label="前へ" d="M9 2v8L3 6z" />
          <Key className="w-[12px]" label="巻き戻し" d="M6 2v8L0 6zM12 2v8L6 6z" />
          <Key className="w-[12px]" label="早送り" d="M0 2v8l6-4zM6 2v8l6-4z" />
          <Key className="w-[10px]" label="次へ" d="M3 2v8l6-4z" />
          <Key className="w-[11px]" label="ゼロに戻る" d="M2 2h2v8H2zM10 2v8L4 6z" />
          <Key className="w-[17px]" label="停止" d="M1 1h10v10H1z" />
          <Key className="w-[15px] text-[#7ee34a]" label="再生" d="M2 0v12l9-6z" />
          <Key className="w-[14px] text-[#c9cbce]" label="録音" d="M6 1a5 5 0 010 10A5 5 0 016 1z" />
          <button aria-label="ループ" className="flex w-[21px] justify-center">
            <svg viewBox="0 0 14 9" className="h-[9px] w-[14px]" aria-hidden="true">
              <path
                d="M5 8H4A3.500 3.500 0 014 1h6a3.500 3.500 0 010 7H8l2-3M5 8l2-4"
                fill="none"
                stroke="#b9bcc0"
              />
            </svg>
          </button>
        </div>
        <div className="flex w-[54px] flex-col gap-[2px] pl-[3px] whitespace-nowrap text-[#e4e6e8]">
          <span>
            <span className="text-[#a5a8ac]">L</span> 00017.02.02.00
          </span>
          <span>
            <span className="text-[#a5a8ac]">R</span> 00017.02.02.00
          </span>
        </div>
        <svg viewBox="0 0 52 14" className="h-[14px] w-[52px]" aria-hidden="true">
          <path d="M1 3h3v2h3M12 2v4M13 4h5M34 2l3 4M42 6h5M42 4.500h5l-2-3h-1z" stroke="#a5a8ac" fill="none" />
          <circle cx="27" cy="4" r="2" fill="#4fb2e0" />
          <circle cx="4" cy="11" r="1.500" stroke="#a5a8ac" fill="none" />
          <path d="M12 11h5M13 9.500h3M26 12l1-3M29 9v3M31 12l2-3M35 9v3M42 12h3l-1-3" stroke="#a5a8ac" fill="none" />
        </svg>
        <Readout className="w-[20px]" value="4 / 4" label="拍子" />
        <Readout className="w-[26px]" value="110.6565" label="テンポ" />
        <svg viewBox="0 0 40 14" className="ml-[2px] h-[14px] w-[40px]" aria-hidden="true">
          <path d="M0 2h20M0 4h22" stroke="#4fb2e0" strokeWidth="1.500" />
          <path d="M0 11h23" stroke="#4fb2e0" strokeWidth="4" strokeDasharray="2 1" />
          <path d="M23 11h6M22 3h7" stroke="#3a3d41" strokeWidth="3" />
          <circle cx="33" cy="11" r="2" fill="#4fb2e0" />
          <circle cx="36" cy="11" r="1.500" fill="none" stroke="#4fb2e0" />
        </svg>
      </div>
      <nav className="ml-auto grid w-[75px] grid-cols-[23px_25px_27px] whitespace-nowrap text-[#d0d3d6]">
        <button className="border-l border-[#44484c]">編集</button>
        <button className="border-l border-[#44484c] text-[4px]">ミックス</button>
        <button className="bg-[#3796cf] text-[4px] text-white">ブラウズ</button>
      </nav>
    </footer>
  )
}

export default function App() {
  return (
    <div className="flex h-screen flex-col overflow-hidden bg-black py-[8px] font-['Liberation_Sans','Noto_Sans_CJK_JP',sans-serif]">
      <TitleBar />
      <Toolbar />
      <div className="h-[4px] shrink-0 border-y border-[#1f2225] bg-[#3d4246]" />
      <main className="flex min-h-0 flex-1">
        <section className="flex min-w-0 flex-1 flex-col">
          <Ruler />
          <div className="relative grid min-h-0 flex-1 auto-rows-fr">
            {tracks.map((track, i) => (
              <div key={track.name} className="flex min-h-0">
                <TrackHeader track={track} index={i} />
                <Lane track={track} selected={i === 0} />
              </div>
            ))}
            <div className="absolute top-[8px] right-[3px] h-[40%] w-[2px] bg-[#6d7176]" />
          </div>
          <ArrangeFooter />
        </section>
        <Browser />
      </main>
      <Transport />
      <div className="h-[3px] shrink-0 bg-black" />
    </div>
  )
}
